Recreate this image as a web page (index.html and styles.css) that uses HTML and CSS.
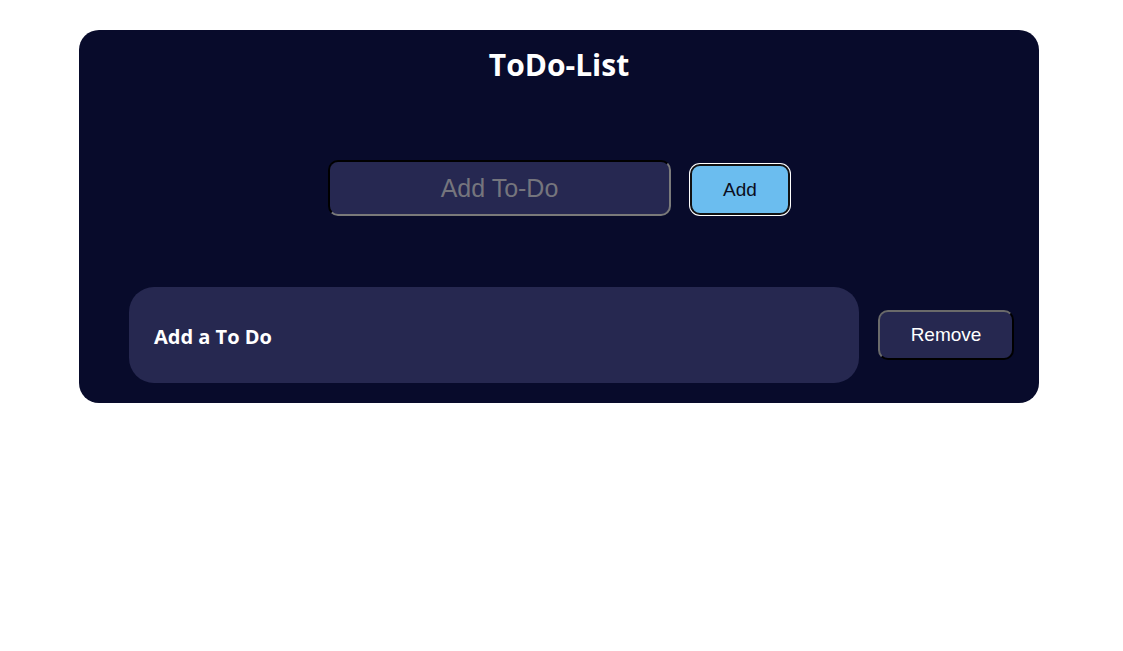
FILE: index.html
```html
<!DOCTYPE html>
<html>
<head>
<meta charset="utf-8">
<link rel="stylesheet" href="styles.css">
</head>
<body>
<div class="card">
  <h1 class="title">ToDo-List</h1>
  <div class="entry">
    <input class="todo-input" type="text" placeholder="Add To-Do">
    <button class="add-btn">Add</button>
  </div>
  <div class="list">
    <div class="item">
      <div class="item-box"><span class="item-text">Add a To Do</span></div>
      <button class="remove-btn">Remove</button>
    </div>
  </div>
</div>
</body>
</html>
```
FILE: styles.css
```css
html, body {
  margin: 0;
  padding: 0;
  background: #ffffff;
}
body {
  padding-top: 30px;
  padding-left: 79px;
}
.card {
  width: 960px;
  box-sizing: border-box;
  background: #080b2b;
  border-radius: 20px;
  padding: 10px 25px 20px 50px;
  display: flex;
  flex-direction: column;
}
.title {
  margin: 6px 0 0 -25px;
  text-align: center;
  font-family: "Open Sans", sans-serif;
  font-weight: 700;
  font-size: 30px;
  line-height: 38px;
  color: #ffffff;
}
.entry {
  display: flex;
  justify-content: center;
  align-items: flex-end;
  gap: 19px;
  margin-top: 76px;
  margin-left: -25px;
}
.todo-input {
  width: 343px;
  height: 56px;
  box-sizing: border-box;
  background: #262851;
  border: 2px inset #7a7a7a;
  border-top-color: #1d1d1d;
  border-left-color: #1d1d1d;
  border-radius: 10px;
  text-align: center;
  font-family: "Liberation Sans", Arial, sans-serif;
  font-size: 25px;
  color: #ffffff;
  outline: none;
}
.todo-input::placeholder {
  color: #75757d;
}
.add-btn {
  width: 100px;
  height: 51px;
  box-sizing: border-box;
  background: #6bbdef;
  border: 2px solid #111111;
  box-shadow: 0 0 0 1px #ffffff;
  border-radius: 10px;
  font-family: "Liberation Sans", Arial, sans-serif;
  font-size: 19px;
  color: #0b0d20;
  margin-bottom: 1px;
}
.list {
  margin-top: 71px;
}
.item {
  display: flex;
  align-items: center;
  gap: 19px;
}
.item-box {
  width: 730px;
  height: 96px;
  box-sizing: border-box;
  background: #262850;
  border-radius: 25px;
  display: flex;
  align-items: center;
  padding-left: 25px;
}
.item-text {
  font-family: "Open Sans", sans-serif;
  font-weight: 700;
  font-size: 20px;
  color: #ffffff;
  padding-top: 2px;
}
.remove-btn {
  width: 136px;
  height: 50px;
  box-sizing: border-box;
  background: #262850;
  border: 2px outset #6a6a6a;
  border-bottom-color: #0d0d0d;
  border-right-color: #0d0d0d;
  border-radius: 10px;
  font-family: "Liberation Sans", Arial, sans-serif;
  font-size: 19px;
  color: #ffffff;
}
```
